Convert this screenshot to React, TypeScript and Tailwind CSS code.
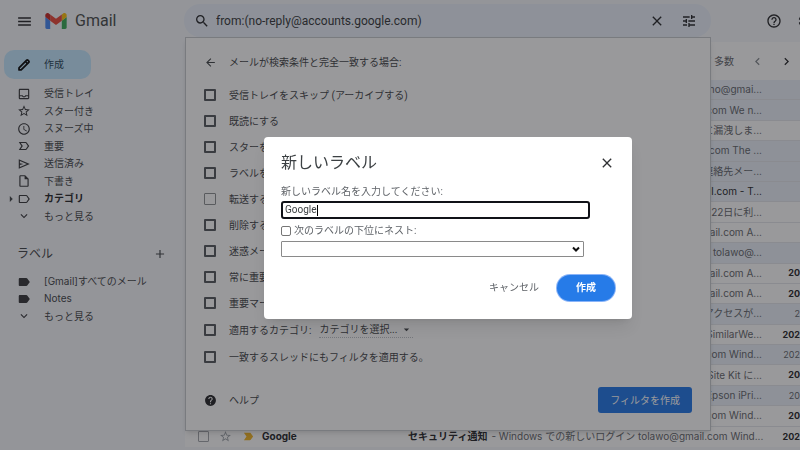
import { useState } from "react";
import type { ComponentType } from "react";
import {
  MdAccessTime,
  MdAdd,
  MdArrowBack,
  MdArrowDropDown,
  MdArrowRight,
  MdChevronLeft,
  MdChevronRight,
  MdClose,
  MdExpandMore,
  MdHelp,
  MdHelpOutline,
  MdLabel,
  MdLabelImportant,
  MdLabelImportantOutline,
  MdLabelOutline,
  MdMenu,
  MdOutlineInbox,
  MdOutlineInsertDriveFile,
  MdSearch,
  MdSettings,
  MdStarBorder,
  MdTune,
} from "react-icons/md";

interface IconProps {
  size?: number;
  className?: string;
}

interface NavItem {
  label: string;
  icon: ComponentType<IconProps>;
  bold?: boolean;
}

interface Mail {
  snippet: string;
  read?: boolean;
  strong?: boolean;
  date?: string;
}

function SendIcon({ size = 14, className }: IconProps) {
  return (
    <svg viewBox="0 0 24 24" width={size} height={size} fill="currentColor" className={className}>
      <path d="M3 20V4l19 8-19 8zm2-3 11.85-5L5 7v3.5l6 1.5-6 1.5V17z" />
    </svg>
  );
}

function PencilIcon({ size = 14, className }: IconProps) {
  return (
    <svg
      viewBox="0 0 24 24"
      width={size}
      height={size}
      fill="none"
      stroke="currentColor"
      strokeWidth="3"
      strokeLinejoin="round"
      className={className}
    >
      <path d="M3.5 20.5v-3.6L16.6 3.8a1.4 1.4 0 0 1 2 0l1.6 1.6a1.4 1.4 0 0 1 0 2L7.1 20.5z" />
      <path d="m14.5 6 3.5 3.5" />
    </svg>
  );
}

const folders: NavItem[] = [
  { label: "受信トレイ", icon: MdOutlineInbox },
  { label: "スター付き", icon: MdStarBorder },
  { label: "スヌーズ中", icon: MdAccessTime },
  { label: "重要", icon: MdLabelImportantOutline },
  { label: "送信済み", icon: SendIcon },
  { label: "下書き", icon: MdOutlineInsertDriveFile },
  { label: "カテゴリ", icon: MdLabelOutline, bold: true },
  { label: "もっと見る", icon: MdExpandMore },
];

const labels: NavItem[] = [
  { label: "[Gmail]すべてのメール", icon: MdLabel },
  { label: "Notes", icon: MdLabel },
  { label: "もっと見る", icon: MdExpandMore },
];

const mails: Mail[] = [
  { snippet: "uno@gmai...", read: true },
  { snippet: "com We n...", read: true },
  { snippet: "に漏洩しま..." },
  { snippet: "com The ...", read: true },
  { snippet: "連絡先メー...", read: true },
  { snippet: "mail.com - T...", read: true, strong: true },
  { snippet: "2月22日に利..." },
  { snippet: "mail.com A..." },
  { snippet: "tolawo@...", read: true },
  { snippet: "mail.com A...", date: "20" },
  { snippet: "mail.com A...", date: "20" },
  { snippet: "アクセスが...", read: true, date: "2" },
  { snippet: "SimilarWe...", date: "202" },
  { snippet: "com Wind...", read: true, date: "202" },
  { snippet: "Site Kit に...", date: "20" },
  { snippet: "Epson iPri...", read: true, date: "20" },
  { snippet: "com Wind...", date: "20" },
];

const actions = [
  "受信トレイをスキップ (アーカイブする)",
  "既読にする",
  "スターを付ける",
  "ラベルを付ける:",
  "転送する",
  "削除する",
  "迷惑メールにしない",
  "常に重要マークを付ける",
  "重要マークを付けない",
];

function GmailLogo() {
  return (
    <svg viewBox="52 42 88 66" className="h-4 w-[22px]" aria-hidden="true">
      <path fill="#4285f4" d="M58 108h14V74L52 59v43c0 3.32 2.69 6 6 6" />
      <path fill="#34a853" d="M120 108h14c3.32 0 6-2.69 6-6V59l-20 15" />
      <path fill="#fbbc04" d="M120 48v26l20-15v-8c0-7.42-8.47-11.65-14.4-7.2" />
      <path fill="#ea4335" d="M72 74V48l24 18 24-18v26L96 92" />
      <path fill="#c5221f" d="M52 51v8l20 15V48l-5.6-4.2c-5.94-4.45-14.4-.22-14.4 7.2" />
    </svg>
  );
}

function NavList({ items }: { items: NavItem[] }) {
  return (
    <>
      {items.map((item) => (
        <li key={item.label} className="relative">
          <a
            href="#"
            className={`flex h-full items-center gap-[13px] pl-[17px] ${item.bold ? "font-bold text-[#202124]" : ""}`}
          >
            <item.icon size={14} className="shrink-0 text-[#303134]" />
            <span className="whitespace-nowrap">{item.label}</span>
          </a>
          {item.bold && (
            <MdArrowRight size={14} className="absolute top-0.5 left-1" />
          )}
        </li>
      ))}
    </>
  );
}

function Sidebar() {
  return (
    <aside className="w-[184px] shrink-0 text-[#3c4043]">
      <button className="mt-2 ml-1 flex h-[29px] w-[87px] items-center gap-[13px] rounded-[10px] bg-[#c2e7ff] pl-[13px] text-[#1f3f55]">
        <PencilIcon size={14} className="text-black" />
        作成
      </button>
      <ul className="mt-1.5 grid h-[140px] auto-rows-fr">
        <NavList items={folders} />
      </ul>
      <div className="mt-5 flex h-[18px] items-center justify-between pr-[17px] pl-[17px]">
        <h2 className="text-xs">ラベル</h2>
        <button aria-label="新しいラベルを作成">
          <MdAdd size={14} />
        </button>
      </div>
      <ul className="mt-2.5 grid h-[52px] auto-rows-fr">
        <NavList items={labels} />
      </ul>
    </aside>
  );
}

const boxClass =
  "size-3 shrink-0 appearance-none rounded-[1px] border-2 border-[#50545a] disabled:border disabled:border-[#8a8c8f]";

function FilterPanel() {
  return (
    <section className="absolute inset-x-0 top-full z-10 ml-px border border-[#c4c7cb] bg-white px-[18px] pb-[17px] text-[#3c4043] shadow-md">
      <div className="mt-3 flex h-6 items-center gap-3">
        <button aria-label="戻る">
          <MdArrowBack size={13} />
        </button>
        <span>メールが検索条件と完全一致する場合:</span>
      </div>
      <div className="mt-2">
        {actions.map((action) => (
          <label key={action} className="flex h-[26px] items-center gap-[13px]">
            <input type="checkbox" className={boxClass} disabled={action === "転送する"} />
            {action}
          </label>
        ))}
        <div className="flex h-7 items-center">
          <label className="flex items-center gap-[13px]">
            <input type="checkbox" className={boxClass} />
            適用するカテゴリ:
          </label>
          <span className="relative ml-2 flex items-center border-b border-dotted border-[#bdc1c6]">
            <select aria-label="カテゴリ" className="w-[94px] appearance-none">
              <option>カテゴリを選択...</option>
            </select>
            <MdArrowDropDown size={13} className="pointer-events-none absolute right-0" />
          </span>
        </div>
        <label className="flex h-[26px] items-center gap-[13px]">
          <input type="checkbox" className={boxClass} />
          一致するスレッドにもフィルタを適用する。
        </label>
      </div>
      <footer className="mt-[17px] flex items-center justify-between">
        <a href="#" className="flex items-center gap-3">
          <MdHelp size={13} className="text-[#202124]" />
          ヘルプ
        </a>
        <button className="h-[26px] rounded-[3px] bg-[#1a73e8] px-3 text-white">
          フィルタを作成
        </button>
      </footer>
    </section>
  );
}

function Header() {
  return (
    <header className="flex h-[42px] shrink-0 items-start font-[Roboto,'Noto_Sans_CJK_JP',sans-serif]">
      <div className="flex h-[42px] w-[184px] shrink-0 items-center pl-4">
        <button aria-label="メインメニュー">
          <MdMenu size={17} />
        </button>
        <a href="#" className="ml-3 flex items-center gap-2 text-base text-[#444746]">
          <GmailLogo />
          Gmail
        </a>
      </div>
      <div className="relative mt-1 min-w-0 flex-1">
        <div className="flex h-[33px] items-center rounded-2xl bg-[#eaf1fb] pr-3.5 pl-2.5">
          <button aria-label="検索">
            <MdSearch size={16} />
          </button>
          <input
            aria-label="メールを検索"
            defaultValue="from:(no-reply@accounts.google.com)"
            className="ml-1.5 min-w-0 flex-1 bg-transparent text-xs text-[#303134]"
          />
          <button aria-label="検索をクリア">
            <MdClose size={16} />
          </button>
          <button aria-label="検索オプションを表示" className="ml-4">
            <MdTune size={16} />
          </button>
        </div>
        <FilterPanel />
      </div>
      <div className="flex h-[42px] w-[89px] shrink-0 items-center gap-[15px] overflow-hidden pl-[55px]">
        <button aria-label="サポート" className="shrink-0">
          <MdHelpOutline size={16} />
        </button>
        <button aria-label="設定" className="shrink-0">
          <MdSettings size={16} />
        </button>
      </div>
    </header>
  );
}

function MailDate({ date, bold }: { date?: string; bold: boolean }) {
  return (
    <span
      className={`ml-[25px] flex w-[13px] shrink-0 justify-end text-[9px] ${bold ? "font-bold text-[#202124]" : ""}`}
    >
      {date}
    </span>
  );
}

function MailList() {
  return (
    <main className="ml-px flex min-w-0 flex-1 flex-col overflow-hidden rounded-tl-xl bg-white text-[#5f6368]">
      <div className="flex h-[38px] shrink-0 items-center justify-end pr-1.5">
        <span>/ 多数</span>
        <button aria-label="前へ" className="ml-4 text-[#80868b]">
          <MdChevronLeft size={15} />
        </button>
        <button aria-label="次へ" className="ml-3.5 text-[#202124]">
          <MdChevronRight size={15} />
        </button>
      </div>
      <ul className="grid flex-1 auto-rows-fr">
        {mails.map((mail, i) => (
          <li
            key={i}
            className={`flex items-center justify-end overflow-hidden border-b border-[#e3e6ea] whitespace-nowrap ${mail.read ? "bg-[#ebf1fa]" : ""}`}
          >
            <span className={mail.strong ? "text-[#202124]" : ""}>{mail.snippet}</span>
            <MailDate date={mail.date} bold={!mail.read} />
          </li>
        ))}
        <li className="flex items-center overflow-hidden pl-[13px] whitespace-nowrap">
          <input
            type="checkbox"
            aria-label="選択"
            className="size-[11px] shrink-0 appearance-none rounded-[1px] border border-[#a0a3a8]"
          />
          <MdStarBorder size={13} className="ml-2.5 shrink-0 text-[#9aa0a6]" />
          <MdLabelImportant size={13} className="ml-2.5 shrink-0 text-[#f2b420]" />
          <span className="ml-[7px] w-[146px] shrink-0 font-bold text-[#202124]">Google</span>
          <b className="text-[#202124]">セキュリティ通知</b>
          <span className="ml-1 min-w-0 flex-1">
            - Windows での新しいログイン tolawo@gmail.com Wind...
          </span>
          <MailDate date="202" bold />
        </li>
      </ul>
    </main>
  );
}

function NewLabelDialog() {
  const [name, setName] = useState("Google");

  return (
    <div className="fixed inset-0 z-20 flex items-center justify-center bg-[#202124]/46 pt-[5px] pl-24 font-[Roboto,'Noto_Sans_CJK_JP',sans-serif]">
      <div
        role="dialog"
        aria-labelledby="dialog-title"
        className="w-[368px] rounded-[4px] bg-white px-[17px] pt-[15px] pb-[18px] text-[#5f6368] shadow-lg"
      >
        <div className="flex h-[22px] items-center justify-between">
          <h1 id="dialog-title" className="text-base text-[#3c4043]">
            新しいラベル
          </h1>
          <button aria-label="閉じる" className="text-[#303134]">
            <MdClose size={16} />
          </button>
        </div>
        <label htmlFor="label-name" className="mt-2.5 block h-4 leading-4">
          新しいラベル名を入力してください:
        </label>
        <div className="relative mt-px mr-[25px]">
          <input
            id="label-name"
            value={name}
            onChange={(e) => setName(e.target.value)}
            className="block h-[18px] w-full rounded-[3px] border-2 border-[#101218] px-0.5 text-[#3c4043] outline-none"
          />
          <span className="absolute top-1 left-9 h-[11px] w-px bg-black" />
        </div>
        <label className="mt-1 flex h-4 items-center gap-[3px]">
          <input
            type="checkbox"
            className="size-2.5 appearance-none rounded-[2px] border border-[#767676]"
          />
          次のラベルの下位にネスト:
        </label>
        <div className="relative mt-0.5 mr-[31px]">
          <select
            aria-label="親ラベル"
            className="block h-4 w-full appearance-none rounded-[1px] border border-[#8a8a8a]"
          >
            <option></option>
          </select>
          <svg
            viewBox="0 0 8 8"
            className="pointer-events-none absolute top-1 right-1 size-2"
            fill="none"
            stroke="#101010"
            strokeWidth="2"
          >
            <path d="M1 2.5 4 5.5 7 2.5" />
          </svg>
        </div>
        <div className="mt-[18px] flex items-center justify-end gap-[18px]">
          <button className="text-[#5f6368]">キャンセル</button>
          <button className="h-[26px] w-[58px] rounded-full bg-[#267be8] font-bold text-white ring-1 ring-[#8ab4f8]">
            作成
          </button>
        </div>
      </div>
    </div>
  );
}

export default function App() {
  return (
    <div className="flex h-screen flex-col overflow-hidden bg-[#f6f8fc] pb-[3px] font-[Inter,'Noto_Sans_CJK_JP',sans-serif] text-[10px] text-[#202124]">
      <Header />
      <div className="flex min-h-0 flex-1">
        <Sidebar />
        <MailList />
      </div>
      <NewLabelDialog />
    </div>
  );
}
